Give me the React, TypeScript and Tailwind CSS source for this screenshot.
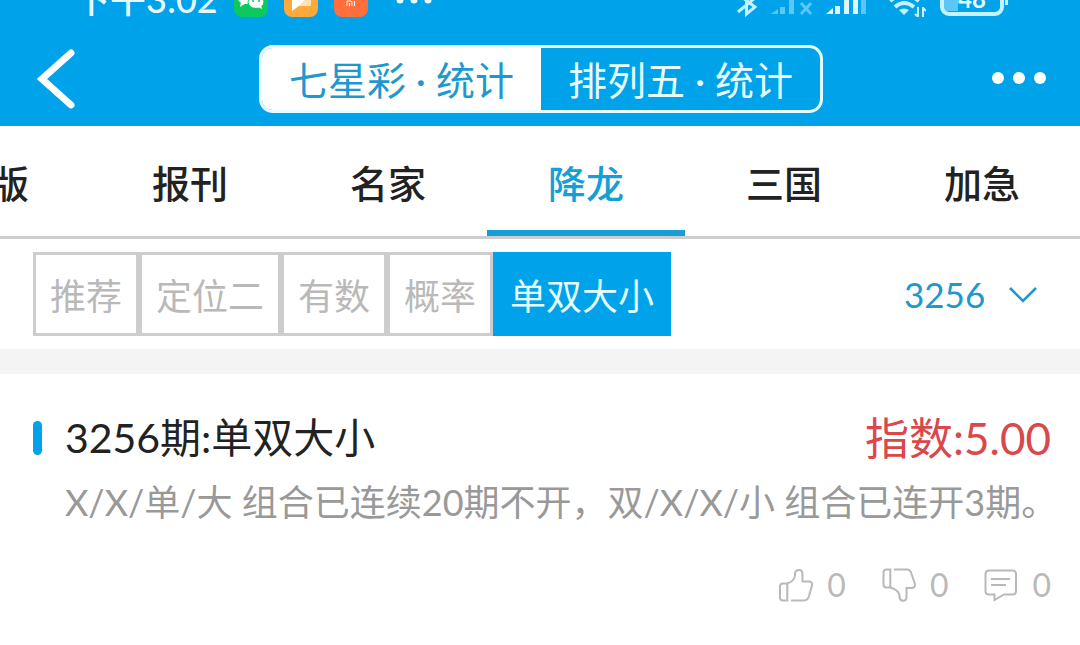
import { useState } from "react";

const canais = ["七星彩 · 统计", "排列五 · 统计"];
const abas = ["版", "报刊", "名家", "降龙", "三国", "加急"];
const filtros = ["推荐", "定位二", "有数", "概率", "单双大小"];

function StatusBar() {
  return (
    <div className="flex h-[17px] items-end justify-between pl-[74px] pr-[71px]">
      <div className="flex items-end gap-4">
        <span className="text-[36px] leading-none font-medium text-[#e6fbff]">下午3:02</span>
        <div className="flex items-end gap-4">
          {/* WeChat */}
          <svg className="h-[34px] w-[34px]" viewBox="0 0 34 34">
            <rect width="34" height="34" rx="8" fill="#0bc95c" />
            <ellipse cx="12" cy="13" rx="9" ry="8" fill="#fff" />
            <path d="M7 18l-1 6 6-4z" fill="#fff" />
            <ellipse cx="22" cy="19" rx="8" ry="6.500" fill="#fff" stroke="#0bc95c" />
            <path d="M24 24l4 2-1-4z" fill="#fff" />
            <circle cx="19" cy="18" r="1" fill="#0bc95c" />
            <circle cx="25" cy="18" r="1" fill="#0bc95c" />
          </svg>
          <svg className="h-[34px] w-[34px]" viewBox="0 0 34 34">
            <rect width="34" height="34" rx="8" fill="#ffa83c" />
            <path d="M8 8h19v13q0 2-2 2H15l-7 5z" fill="#fff" />
            <path d="M27 10v11q0 2-2 2H15z" fill="#ffe2b8" />
          </svg>
          <svg className="h-[34px] w-[34px]" viewBox="0 0 34 34">
            <rect width="34" height="34" rx="8" fill="#ff6f3c" />
            <path d="M13 23v-5h3.500q1.500 0 1.500 1.500V23M15.500 20v3M20.500 18v5" fill="none" stroke="#fff" />
          </svg>
          <svg className="ml-3 h-[34px] w-[36px]" viewBox="0 0 36 34" fill="#e6fbff">
            <circle cx="4" cy="17" r="3.500" />
            <circle cx="18" cy="17" r="3.500" />
            <circle cx="32" cy="17" r="3.500" />
          </svg>
        </div>
      </div>

      <div className="flex items-end gap-[14px]">
        {/* Bluetooth */}
        <svg className="h-[34px] w-[20px]" viewBox="0 0 20 34" fill="none" stroke="#c5f2ff" strokeWidth="3">
          <path d="M1 29L18 15L9.500 6v25L18 24L1 11" />
        </svg>
        <svg className="h-[34px] w-[41px]" viewBox="0 0 41 34" fill="#5cc6f7">
          <path d="M0 31l7-5v5zM9 24h5v7H9zM18 17h5v14h-5z" />
          <path d="M30 20l10 11M40 20L30 31" stroke="#5cc6f7" strokeWidth="3" />
        </svg>
        <svg className="h-[34px] w-[41px]" viewBox="0 0 41 34" fill="#dcf9ff">
          <path d="M0 31l7-6v6zM9 23h5v8H9zM18 17h5v14h-5zM27 10h5v21h-5z" />
          <path d="M35 4h5v27h-5z" fill="#5cc6f7" />
        </svg>
        <svg className="ml-2 h-[34px] w-[37px]" viewBox="0 0 37 34" fill="none" stroke="#c5f2ff" strokeWidth="4">
          <path d="M1 18Q15 6 30 18M6 24Q15 16 25 24" />
          <path d="M15 32l-5-5q5-3 10 0z" fill="#c5f2ff" stroke="none" />
          <path d="M29 24v11M34 24v10M26 31l3 3M37 28l-3-3" strokeWidth="2" />
        </svg>
        <svg className="h-[34px] w-[69px]" viewBox="0 0 69 34">
          <rect x="4" y="4" width="14" height="24" fill="#5cc6f7" />
          <rect x="2" y="2" width="60" height="29" rx="7" fill="none" stroke="#c5f2ff" strokeWidth="4" />
          <rect x="65" y="12" width="3" height="10" fill="#c5f2ff" />
          <text x="32" y="25" textAnchor="middle" fontSize="24" fontWeight="700" fill="#e6fbff">48</text>
        </svg>
      </div>
    </div>
  );
}

function LikeIcon() {
  return (
    <svg className="h-[34px] w-[34px]" viewBox="0 0 34 34" fill="none" stroke="currentColor" strokeWidth="2">
      <path d="M8.300 15.500v17H4q-3 0-3-3V18.500q0-3 3-3z" />
      <path d="M8.300 15.500C13 14 15.500 12 16 7.500V5.500Q16.500 2 20 2Q23.500 2 23.500 6V13.500H30Q33.500 13.500 33 17.500L30 28Q28.500 32.500 25 32.500H12" />
    </svg>
  );
}

function DislikeIcon() {
  return (
    <svg className="h-[34px] w-[34px]" viewBox="0 0 34 34" fill="none" stroke="currentColor" strokeWidth="2">
      <path d="M8.300 1.500V19.500H4.500Q1.500 19.500 1.500 16.500V4.500Q1.500 1.500 4.500 1.500z" />
      <path d="M12 1.500H25Q28 1.500 29 4.500L32.800 15.500Q33.500 20 29.500 20H24.500V29Q24.500 32.800 21.300 32.800Q18 32.800 17.500 29.500V27Q16.500 22 8.300 19.500" />
    </svg>
  );
}

function CommentIcon() {
  return (
    <svg className="h-[34px] w-[34px]" viewBox="0 0 34 34" fill="none" stroke="currentColor" strokeWidth="2">
      <path d="M5 2.500H28.500Q32 2.500 32 6V23Q32 26.500 28.500 26.500H20L10.500 32V26.500H5Q1.500 26.500 1.500 23V6Q1.500 2.500 5 2.500z" />
      <path d="M7 11H26M7 17H22" />
    </svg>
  );
}

export default function App() {
  const [canal, setCanal] = useState(0);
  const [aba, setAba] = useState("降龙");
  const [filtro, setFiltro] = useState("单双大小");
  const [periodo, setPeriodo] = useState("3256");

  const acoes = [
    { nome: "赞", icon: <LikeIcon />, total: 0 },
    { nome: "踩", icon: <DislikeIcon />, total: 0 },
    { nome: "评论", icon: <CommentIcon />, total: 0 },
  ];

  return (
    <div lang="zh-CN" className="min-h-screen overflow-hidden bg-white font-[Lato,'Noto_Sans_CJK_SC',sans-serif]">
      <header className="bg-[#00a2ea] pb-[13px]">
        <StatusBar />

        <div className="mt-7 grid grid-cols-[1fr_auto_1fr] items-center pl-9 pr-[34px]">
          <button type="button" aria-label="返回" className="justify-self-start">
            <svg className="h-[60px] w-10" viewBox="0 0 40 60" fill="none" stroke="#fff" strokeWidth="7">
              <path d="M35 4L6 30L35 56" strokeLinecap="round" />
            </svg>
          </button>

          <div className="flex h-[68px] overflow-hidden rounded-[14px] border-3 border-[#e6fdff]">
            {canais.map((nome, i) => (
              <button
                key={nome}
                type="button"
                onClick={() => setCanal(i)}
                className={`px-[27px] pt-[2px] text-[39px] leading-none whitespace-pre ${
                  canal === i ? "bg-white text-[#1e98cf]" : "text-[#e6fdff]"
                }`}
              >
                {nome}
              </button>
            ))}
          </div>

          <button type="button" aria-label="更多" className="justify-self-end">
            <svg className="h-[14px] w-[54px]" viewBox="0 0 54 14" fill="#fff">
              <circle cx="6" cy="6" r="6" />
              <circle cx="27" cy="6" r="6" />
              <circle cx="48" cy="6" r="6" />
            </svg>
          </button>
        </div>
      </header>

      <nav className="-ml-[107px] flex h-[113px] border-b-3 border-[#cdcdcd]">
        {abas.map((nome) => (
          <button
            key={nome}
            type="button"
            onClick={() => setAba(nome)}
            className={`w-[198px] shrink-0 border-b-6 pt-[10px] text-[38px] leading-none font-medium first:pl-9 ${
              aba === nome ? "border-[#159fd6] text-[#159fd6]" : "border-transparent text-[#222]"
            }`}
          >
            {nome}
          </button>
        ))}
      </nav>

      <div className="flex items-center justify-between border-b-[25px] border-[#f4f4f4] py-[13px] pl-[33px] pr-[42px]">
        <div className="flex">
          {filtros.map((nome) => (
            <button
              key={nome}
              type="button"
              onClick={() => setFiltro(nome)}
              className={`h-[84px] border-3 px-[14px] pt-1 text-[36px] leading-none whitespace-nowrap ${
                filtro === nome
                  ? "border-[#00a2ea] bg-[#00a2ea] text-[#e6fdff]"
                  : "border-[#cdcdcd] text-[#b9b9b9]"
              }`}
            >
              {nome}
            </button>
          ))}
        </div>

        <div className="relative flex items-center text-[#1e98cf]">
          <select
            aria-label="期号"
            value={periodo}
            onChange={(e) => setPeriodo(e.target.value)}
            className="appearance-none bg-transparent pr-[52px] text-[35px] leading-none"
          >
            <option value="3256">3256</option>
          </select>
          <svg
            className="pointer-events-none absolute right-0 h-[18px] w-[30px]"
            viewBox="0 0 30 18"
            fill="none"
            stroke="currentColor"
            strokeWidth="2.500"
          >
            <path d="M2 3L15 16L28 3" />
          </svg>
        </div>
      </div>

      <article className="pt-9 pr-[29px] pl-[33px]">
        <div className="flex items-center justify-between">
          <div className="flex items-center gap-[23px]">
            <span className="h-[34px] w-[9px] rounded-full bg-[#00a2ea]" />
            <h2 className="text-[41px] leading-[56px] text-[#222]">3256期:单双大小</h2>
          </div>
          <strong className="text-[44px] leading-[56px] font-normal text-[#d9484a]">指数:5.00</strong>
        </div>

        <p className="-mr-5 mt-2 ml-8 text-[36px] leading-[56px] text-[#999]">
          X/X/单/大 组合已连续20期不开，双/X/X/小 组合已连开3期。
        </p>

        <div className="mt-[38px] flex justify-end gap-9 text-[#b9b9b9]">
          {acoes.map((acao) => (
            <button key={acao.nome} type="button" aria-label={acao.nome} className="flex items-center gap-[14px]">
              {acao.icon}
              <span className="text-[32px] leading-[34px]">{acao.total}</span>
            </button>
          ))}
        </div>
      </article>
    </div>
  );
}
